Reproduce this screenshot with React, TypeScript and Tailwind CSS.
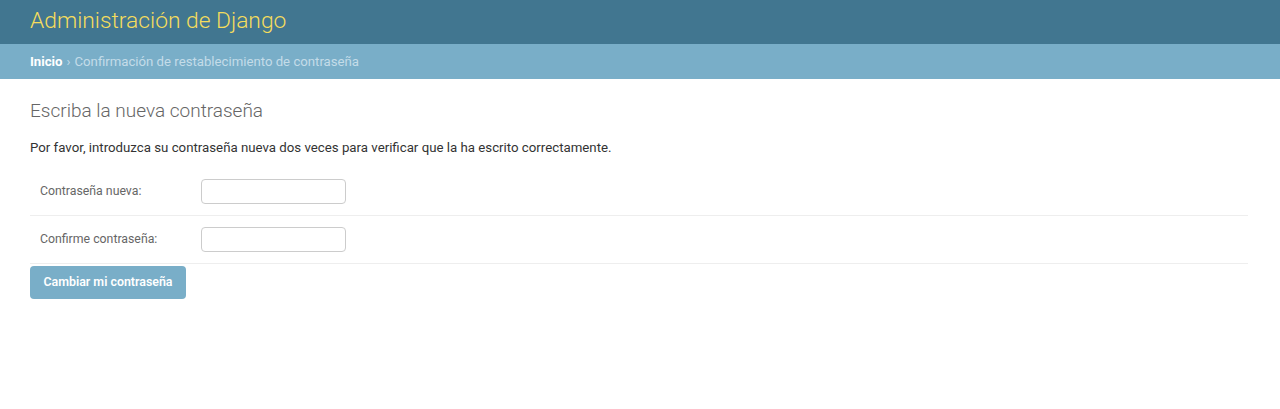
import React from 'react';

const Row: React.FC<{ label: string }> = ({ label }) => (
  <div className="flex items-center px-[10px] h-[48px] border-b border-[#eeeeee]">
    <label className="w-[161px] shrink-0 text-[12.3px] text-[#666666]">{label}</label>
    <input
      type="password"
      className="w-[145px] h-[25px] border border-[#cccccc] rounded-[4px] bg-white px-[6px] outline-none"
    />
  </div>
);

export default function App() {
  return (
    <div className="min-h-screen bg-white font-['Roboto','Liberation_Sans',sans-serif] text-[#333333]">
      {/* Header */}
      <div className="h-[44px] bg-[#417690] flex items-center px-[30px]">
        <h1 className="text-[22.8px] font-light text-[#f5dd5d] leading-none -mt-[1px]">
          Administración de Django
        </h1>
      </div>

      {/* Breadcrumbs */}
      <div className="h-[35px] bg-[#79aec8] flex items-center px-[30px] text-[13.2px] text-[#c4dce8]">
        <a className="text-white font-bold">Inicio</a>
        <span className="mx-[4px]">›</span>
        <span>Confirmación de restablecimiento de contraseña</span>
      </div>

      {/* Content */}
      <div className="px-[30px] pt-[20px]">
        <h1 className="text-[19px] font-light text-[#666666] leading-[24px]">
          Escriba la nueva contraseña
        </h1>
        <p className="mt-[15px] text-[13.25px] leading-[20px]">
          Por favor, introduzca su contraseña nueva dos veces para verificar que la ha escrito correctamente.
        </p>
        <form className="mt-[10px] mr-[2px]">
          <Row label="Contraseña nueva:" />
          <Row label="Confirme contraseña:" />
          <button
            type="button"
            className="mt-[2px] h-[33px] w-[156px] rounded-[4px] bg-[#79aec8] text-white text-[12.4px] font-semibold"
          >
            Cambiar mi contraseña
          </button>
        </form>
      </div>
    </div>
  );
}
